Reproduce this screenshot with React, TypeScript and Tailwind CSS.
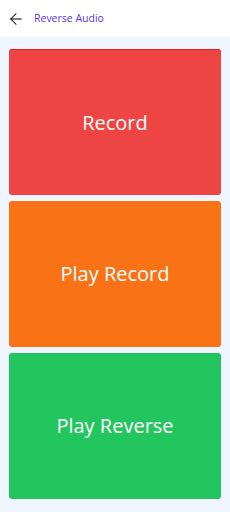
import React from 'react'
import { ArrowLeft } from 'lucide-react'

const buttons = [
  { label: 'Record', className: 'bg-[#ef4444] border-t border-[#e11d1d]' },
  { label: 'Play Record', className: 'bg-[#f97316]' },
  { label: 'Play Reverse', className: 'bg-[#22c55e]' },
]

export default function App() {
  return (
    <div className="w-[230px] h-[512px] flex flex-col bg-[#eff6ff] font-['Open_Sans','Lato',sans-serif]">
      <header className="h-[37px] bg-white flex items-center pl-[7px] gap-[9px] shrink-0">
        <ArrowLeft className="w-[18px] h-[18px] text-black" strokeWidth={1.4} />
        <span className="text-[10.5px] font-medium text-[#5a35f0]">Reverse Audio</span>
      </header>
      <main className="flex flex-col gap-[6px] px-[9px] pt-[12px]">
        {buttons.map((b) => (
          <button
            key={b.label}
            type="button"
            className={`h-[146px] w-full rounded-[3px] flex items-center justify-center text-white text-[20px] font-medium ${b.className}`}
          >
            {b.label}
          </button>
        ))}
      </main>
    </div>
  )
}
